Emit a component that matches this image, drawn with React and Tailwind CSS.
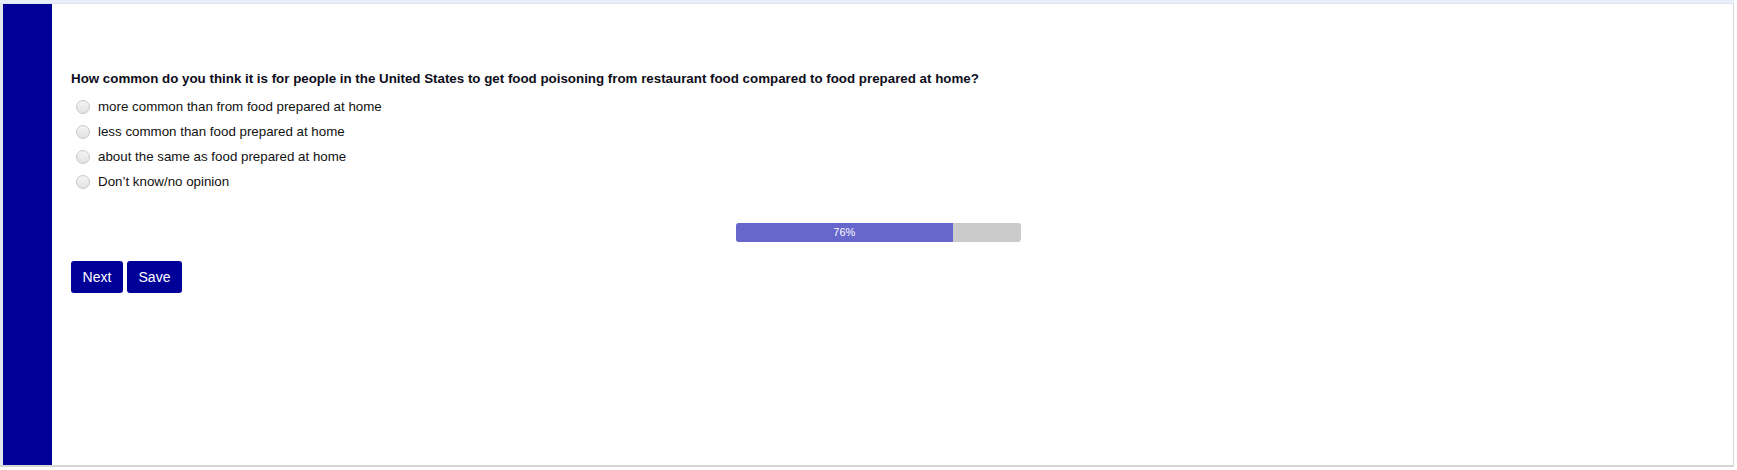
import React from 'react';

const options = [
    'more common than from food prepared at home',
    'less common than food prepared at home',
    'about the same as food prepared at home',
    'Don\u2019t know/no opinion',
];

const Radio = () => (
    <span className="ml-[5px] mr-[8px] block h-[14px] w-[14px] shrink-0 rounded-full border border-[#c8c8c8] bg-[linear-gradient(#f4f4f4,#e2e2e2)]"></span>
);

export default function App() {
    const percent = 76;

    return (
        <div className="h-[470px] w-[1737px] bg-white font-['Liberation_Sans',Arial,sans-serif] text-[#111]">
            <div className="flex w-[1734px] flex-col">
                {/* top band */}
                <div className="h-[4px] border-b border-[#dde4f1] bg-[#e9eef8]"></div>

                <div className="flex h-[461px]">
                    <div className="w-[3px] bg-[#e2e6ee]"></div>
                    {/* sidebar */}
                    <div className="w-[49px] bg-[#000099]"></div>

                    {/* survey content */}
                    <div className="flex-1 border-r border-[#d4d4d4] pl-[19px] pt-[67px]">
                        <p className="text-[13.33px] font-bold leading-[15px] text-[#0d0d1a]">
                            How common do you think it is for people in the United States to get food poisoning from restaurant food compared to food prepared at home?
                        </p>

                        <div className="mt-[8px] flex flex-col">
                            {options.map((label, i) => (
                                <label key={i} className="flex h-[25px] items-center text-[13.33px] text-[#111]">
                                    <Radio />
                                    <span>{label}</span>
                                </label>
                            ))}
                        </div>

                        <div className="ml-[665px] mt-[29px] flex h-[19px] w-[285px] overflow-hidden rounded-[3px] bg-[#cbcbcb]">
                            <div
                                className="flex h-full items-center justify-center bg-[#6666cc] text-[11px] text-white"
                                style={{ width: `${percent}%` }}
                            >
                                {percent}%
                            </div>
                        </div>

                        <div className="mt-[19px] flex gap-[4px]">
                            <button className="h-[32px] w-[52px] rounded-[3px] bg-[#000099] text-[14px] text-white">
                                Next
                            </button>
                            <button className="h-[32px] w-[55px] rounded-[3px] bg-[#000099] text-[14px] text-white">
                                Save
                            </button>
                        </div>
                    </div>
                </div>

                {/* bottom line */}
                <div className="h-[2px] bg-[#d6d6d6]"></div>
            </div>
        </div>
    );
}
